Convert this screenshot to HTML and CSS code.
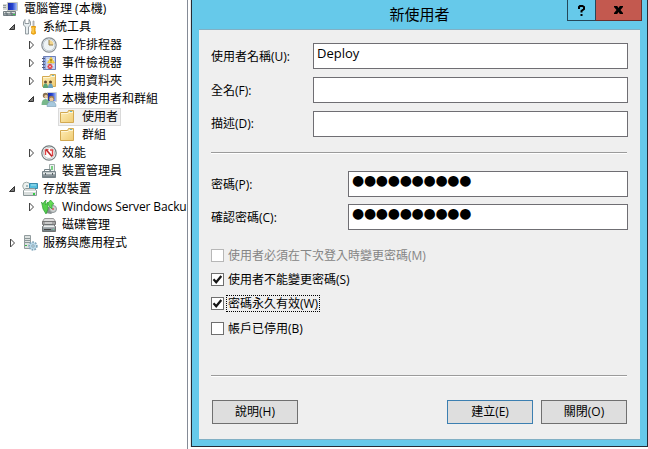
FILE: index.html
```html
<!DOCTYPE html>
<html lang="zh-Hant">
<head>
<meta charset="utf-8">
<title>電腦管理</title>
<link rel="stylesheet" href="styles.css">
</head>
<body>
<svg class="defs" width="0" height="0">
  <defs>
    <linearGradient id="gold" x1="0" y1="0" x2="1" y2="1"><stop offset="0" stop-color="#ffefba"/><stop offset="1" stop-color="#efcb72"/></linearGradient>
    <linearGradient id="metal" x1="0" y1="0" x2="0" y2="1"><stop offset="0" stop-color="#d4d9da"/><stop offset="1" stop-color="#68757b"/></linearGradient>
    <linearGradient id="screen" x1="0" y1="0" x2="1" y2="0"><stop offset="0" stop-color="#1725a5"/><stop offset=".5" stop-color="#2644cf"/><stop offset="1" stop-color="#b4ccff"/></linearGradient>
    <symbol id="folder" viewBox="0 0 16 16"><path d="M1.500 3.500h7l1-2h5v12h-13z" fill="url(#gold)" stroke="#d3a951"/><path d="M2 4.500h7l1-1h4" fill="none" stroke="#fff6d5"/><path d="M11 2.500h2" stroke="#6bb5c6"/></symbol>
    <symbol id="open" viewBox="0 0 8 8"><path d="M6.500 1.500v5h-5z" fill="#777" stroke="#333"/></symbol>
    <symbol id="closed" viewBox="0 0 8 10"><path d="M2.500 1v8l4-4z" fill="#fff" stroke="#444"/></symbol>
  </defs>
</svg>
<main class="desktop">
  <nav class="tree">
    <div class="row root"><svg class="icon" viewBox="0 0 16 16"><path d="M5.500 1.500h10v8h-10z" fill="url(#screen)" stroke="#c4c7c0"/><path d="M1 3h4v6H1z" fill="#d5d8d5"/><path d="M1 4.500h3M1 6.500h3" stroke="#939c9a"/><path d="M9 10h4v2H9z" fill="#a9afad"/><path d="M1.500 10.500h12v4h-12z" fill="#929ca0" stroke="#747f83"/><path d="M2 11.500h11" stroke="#dde2df"/><path d="M3 12h2v3M8 12h2v3" fill="none" stroke="#5f6b70"/><path d="M11 13h2v1h-2z" fill="#33cf4b"/></svg><span>電腦管理 (本機)</span></div>
    <div class="row l1"><svg class="arrow"><use href="#open"/></svg><svg class="icon" viewBox="0 0 16 16"><path d="M3 .5 1.500 3v3l2 2v7h3V8l2-2V3L7 .5v4H3z" fill="#e8eef0" stroke="#7b878c" stroke-width=".8"/><path d="M11 2h1v6h-1z" fill="#ddd" stroke="#999" stroke-width=".7"/><path d="M9.500 7.500h4l-.5 2v2l.5 3q-2 1.500-4 0l.5-3v-2z" fill="#f8b21c" stroke="#e19a12"/><path d="M11 8.500V14" stroke="#ffdc73"/></svg><span>系統工具</span></div>
    <div class="row l2"><svg class="arrow"><use href="#closed"/></svg><svg class="icon" viewBox="0 0 16 16"><circle cx="8" cy="8" r="7.200" fill="#eef3f5" stroke="#868d92" stroke-width="1.200"/><circle cx="8" cy="8" r="5.800" fill="none" stroke="#c5ced5"/><path d="M8 3v5h4.500A5 5 0 0 0 8 3" fill="#f3d68f"/><path d="M8 3v5h4" fill="none" stroke="#927c49"/></svg><span>工作排程器</span></div>
    <div class="row l2"><svg class="arrow"><use href="#closed"/></svg><svg class="icon" viewBox="0 0 16 16"><path d="M2.500 1.500h12v13h-12z" fill="#91a7dc" stroke="#6c7fb9"/><path d="M5 2h9v12H5z" fill="#c6d4f0"/><path d="M6 4.500h7M6 7.500h7M6 10.500h7" stroke="#e7edf9"/><path d="M1 3.500h3M1 6.500h3M1 9.500h3M1 12.500h3" stroke="#555e80"/><path d="m10 2 3.500 6h-7z" fill="#ffdc48" stroke="#e2af25" stroke-width=".6"/><path d="M10 4v2M10 6.500v1" stroke="#604a00"/><circle cx="9" cy="11.500" r="2.500" fill="#df3740"/><path d="m8 10.500 2 2m0-2-2 2" stroke="#fff" stroke-width=".8"/></svg><span>事件檢視器</span></div>
    <div class="row l2"><svg class="arrow"><use href="#closed"/></svg><svg class="icon" viewBox="0 0 16 16"><use href="#folder" width="16" height="16"/><circle cx="4.500" cy="9" r="1.500" fill="#695036"/><path d="M2 15q0-4.500 2.500-4.500T7 15" fill="#5ba576"/><circle cx="9.500" cy="9" r="1.500" fill="#604728"/><path d="M7 15q0-4.500 2.500-4.500T12 15" fill="#6ba3bf"/></svg><span>共用資料夾</span></div>
    <div class="row l2"><svg class="arrow"><use href="#open"/></svg><svg class="icon" viewBox="0 0 16 16"><path d="M6.500 1.500h9v9h-9z" fill="url(#screen)" stroke="#cbd0d2"/><circle cx="4.500" cy="4.500" r="2.700" fill="#887151"/><circle cx="5" cy="5.500" r="1.700" fill="#e7c59c"/><path d="M.5 14q0-6 4-6t4 6z" fill="#79b88c"/><circle cx="10.500" cy="7.500" r="2.700" fill="#9b7950"/><circle cx="10.500" cy="8.500" r="1.900" fill="#edc798"/><path d="M6 15.500q0-5 4.500-5t4.500 5z" fill="#a7c9dd" stroke="#779bb0" stroke-width=".6"/></svg><span>本機使用者和群組</span></div>
    <div class="row l3 selected"><svg class="icon"><use href="#folder"/></svg><span>使用者</span></div>
    <div class="row l3"><svg class="icon"><use href="#folder"/></svg><span>群組</span></div>
    <div class="row l2"><svg class="arrow"><use href="#closed"/></svg><svg class="icon" viewBox="0 0 16 16"><circle cx="8" cy="8" r="7.200" fill="#fff" stroke="#747c7e" stroke-width="1.200"/><circle cx="8" cy="8" r="5.500" fill="none" stroke="#bcc3c4"/><path d="M4.500 10V5l3-.500M9 5h2.500v6" fill="none" stroke="#df4545" stroke-width="1.400"/><path d="m5 4.500 6 7" stroke="#bd272a" stroke-width="1.600"/></svg><span>效能</span></div>
    <div class="row l2 leaf"><svg class="icon" viewBox="0 0 16 16"><path d="M8.500 1.500h5v8h-5z" fill="#edf2f1" stroke="#a0aba9"/><path d="M11 3v4" stroke="#54c65f" stroke-width="1.500"/><path d="M3.500 9V6.500h6V9" fill="none" stroke="#77858a"/><path d="M1.500 8.500h13v6h-13z" fill="url(#metal)" stroke="#768388"/><path d="M2 10.500h12" stroke="#e0e5e5"/><path d="M4.500 10v2m7-2v2" stroke="#566165"/></svg><span>裝置管理員</span></div>
    <div class="row l1"><svg class="arrow"><use href="#open"/></svg><svg class="icon" viewBox="0 0 16 16"><circle cx="4.500" cy="5" r="3.800" fill="#edf1ef" stroke="#a0adab"/><circle cx="5" cy="5" r="1" fill="#8da8ad"/><path d="M7.500 2.500h8v5h-8z" fill="#54bddd" stroke="#398bad"/><path d="M9 4h5" stroke="#a9e4ee"/><path d="m1.500 9.500 2-2h9l2 2v5h-13z" fill="#d8dddc" stroke="#8b9798"/><path d="M2 10.500h12" stroke="#fff"/><path d="M11 12h2v2h-2z" fill="#30cb43"/></svg><span>存放裝置</span></div>
    <div class="row l2"><svg class="arrow"><use href="#closed"/></svg><svg class="icon" viewBox="0 0 16 16"><path d="M4 8h8l2 4-4 3-5-1z" fill="#888f91"/><circle cx="12" cy="10" r="3.500" fill="#ccd0cf" stroke="#91989a"/><circle cx="12" cy="10" r="1" fill="#df5261"/><path d="M.5 3 2 5l1-2 2-2-.5 5L7 3v7l-2 5-3-5z" fill="#55d04c" stroke="#319d36" stroke-width=".7"/><path d="m7 4 2.500-3L13 5l-2 .5V10L8 7z" fill="#63dc54" stroke="#319d36" stroke-width=".7"/></svg><span class="backup">Windows Server Backu</span></div>
    <div class="row l2 leaf"><svg class="icon" viewBox="0 0 16 16"><path d="M3.500 1.500h9l2 3h-13z" fill="#ddd" stroke="#999"/><path d="M1.500 4.500h13v3h-13z" fill="#a5a5a5" stroke="#777"/><path d="m3.500 7.500-2 2v5h13v-5l-2-2z" fill="url(#metal)" stroke="#707373"/><path d="M3 9.500h10M4 6h7" stroke="#eee"/><path d="M3 12.500h7" stroke="#444"/><path d="M12 12h1v1h-1z" fill="#6d9"/></svg><span>磁碟管理</span></div>
    <div class="row l1"><svg class="arrow"><use href="#closed"/></svg><svg class="icon" viewBox="0 0 16 16"><path d="M2.500.5h6v13h-6z" fill="#dce1e0" stroke="#929c9e"/><path d="M3 3.500h5M3 5.500h5M3 7.500h5" stroke="#8b9798"/><path d="M3 10h2v1H3z" fill="#35b747"/><circle cx="11" cy="11" r="3.700" fill="#d1e5f0" stroke="#7fa5ba" stroke-width="2" stroke-dasharray="1.700 1"/><circle cx="11" cy="11" r="3" fill="#b9d9ea"/><circle cx="11" cy="11" r="1.200" fill="#fff" stroke="#7d9faf"/></svg><span>服務與應用程式</span></div>
  </nav>
  <section class="dialog">
    <header class="titlebar"><h1>新使用者</h1><div class="controls"><button class="help"><svg width="7" height="11" viewBox="0 0 7 11"><path d="M1 4V2l1-1h2.500L6 2v2L3.500 6v1.500M3.500 9v2" fill="none" stroke="#000" stroke-width="2"/></svg></button><button class="close"><svg width="9" height="8" viewBox="0 0 9 8"><path d="M0 0h3.200l1.300 2L5.800 0H9v1L6.500 4 9 7v1H5.800L4.500 6 3.200 8H0V7l2.500-3L0 1z"/></svg></button></div></header>
    <form class="body">
      <div class="field"><label>使用者名稱(U):</label><div class="input">Deploy</div></div>
      <div class="field"><label>全名(F):</label><div class="input"></div></div>
      <div class="field third"><label>描述(D):</label><div class="input"></div></div>
      <div class="rule first"></div>
      <div class="field password"><label>密碼(P):</label><div class="input dots">●●●●●●●●●●</div></div>
      <div class="field password"><label>確認密碼(C):</label><div class="input dots">●●●●●●●●●●</div></div>
      <div class="checks">
        <div class="check disabled"><i></i><span>使用者必須在下次登入時變更密碼(M)</span></div>
        <div class="check"><i><svg viewBox="0 0 11 11"><path d="m1.500 5.300 2.700 3L9.300 2" fill="none" stroke="#161616" stroke-width="2.200"/></svg></i><span>使用者不能變更密碼(S)</span></div>
        <div class="check"><i><svg viewBox="0 0 11 11"><path d="m1.500 5.300 2.700 3L9.300 2" fill="none" stroke="#161616" stroke-width="2.200"/></svg></i><span class="focus">密碼永久有效(W)</span></div>
        <div class="check last"><i></i><span>帳戶已停用(B)</span></div>
      </div>
      <div class="rule"></div>
      <footer class="actions"><button type="button">說明(H)</button><button type="button" class="default">建立(E)</button><button type="button">關閉(O)</button></footer>
    </form>
  </section>
</main>
</body>
</html>
```
FILE: styles.css
```css
* { box-sizing: border-box; }
body { margin: 0; background: #fff; color: #000; font: 12px/18px "Open Sans", "Noto Sans CJK TC", sans-serif; overflow: hidden; }
button { font: inherit; color: inherit; padding: 0; border-radius: 0; }
.defs { display: block; height: 0; }
.desktop { display: flex; width: 648px; height: 449px; }
.tree { width: 188px; border-right: 1px solid #858b96; flex: none; }
.row { display: flex; align-items: center; height: 18px; padding-left: 2px; white-space: nowrap; }
.row.l1 { padding-left: 8px; }
.row.l2 { padding-left: 27px; }
.row.l3 { padding-left: 59px; }
.row.leaf { padding-left: 41px; }
.row > span { margin-left: 5px; }
.row.l3 > span { margin-left: 7px; }
.arrow { width: 8px; height: 10px; margin-right: 6px; flex: none; }
.icon { width: 16px; height: 16px; flex: none; }
.row.root > span { margin-left: 6px; }
.row.selected { width: 63px; margin-left: 58px; padding-left: 0; border: 1px solid #dadada; background: #f2f2f2; }
.backup { letter-spacing: -.12px; }
.dialog { width: 457px; height: 447px; margin-left: 3px; border: solid #252b35; border-width: 0 1px 1px; padding: 0 7px 7px; background: #66c9ea; box-shadow: -1px 0 #e7e7e7; flex: none; }
.titlebar { position: relative; height: 29px; }
h1 { margin: 0; padding-top: 3px; text-align: center; font-size: 15px; line-height: 22px; font-weight: 400; }
.controls { position: absolute; right: -2px; top: 0; display: flex; height: 21px; }
.controls button { display: flex; align-items: center; justify-content: center; border: 1px solid #24485a; border-top: 0; background: #66c9ea; }
.controls .help { width: 28px; border-right: 0; }
.controls .close { width: 47px; border-color: #692f2c; border-left-color: #24485a; background: #c3594f; }
.body { height: 411px; padding: 13px 12px 0; border-top: 1px solid #82b0c4; border-bottom: 1px solid #82b0c4; background: #efefef; }
.field { display: flex; width: 417px; height: 26px; margin-bottom: 8px; }
.field label { width: 102px; padding-top: 5px; }
.third label { padding-top: 4px; }
.input { flex: 1; border: 1px solid #6f6e73; background: #fff; padding: 1px 3px; font-size: 13px; line-height: 17px; }
.field.password { margin-bottom: 7px; }
.password label { width: 137px; }
.input.dots { font: 14px/17px "DejaVu Sans", sans-serif; letter-spacing: -.3px; padding: 0 3px; }
.rule { width: 416px; height: 2px; background: #9b9b9b; border-bottom: 1px solid #fff; }
.rule.first { margin: 15px 0 17px; }
.checks { height: 138px; padding-top: 6px; }
.check { display: flex; align-items: center; height: 24px; }
.check i { width: 13px; height: 13px; border: 1px solid #6f6f6f; background: #fff; }
.check i svg { display: block; width: 11px; height: 11px; }
.check span { margin-left: 2px; padding: 0 1px; line-height: 17px; border: 1px solid transparent; border-width: 0 1px; }
.check .focus { height: 17px; border: 1px dotted #000; line-height: 15px; }
.check.disabled { color: #858585; }
.disabled i { border-color: #b7b7b7; }
.check.last { margin-top: 1px; }
.actions { display: flex; gap: 8px; padding: 23px 0 0 1px; }
.actions button { width: 86px; height: 24px; border: 1px solid #707070; background: #dedede; }
.actions .default { margin-left: 141px; border-color: #3c7fb1; }
```
